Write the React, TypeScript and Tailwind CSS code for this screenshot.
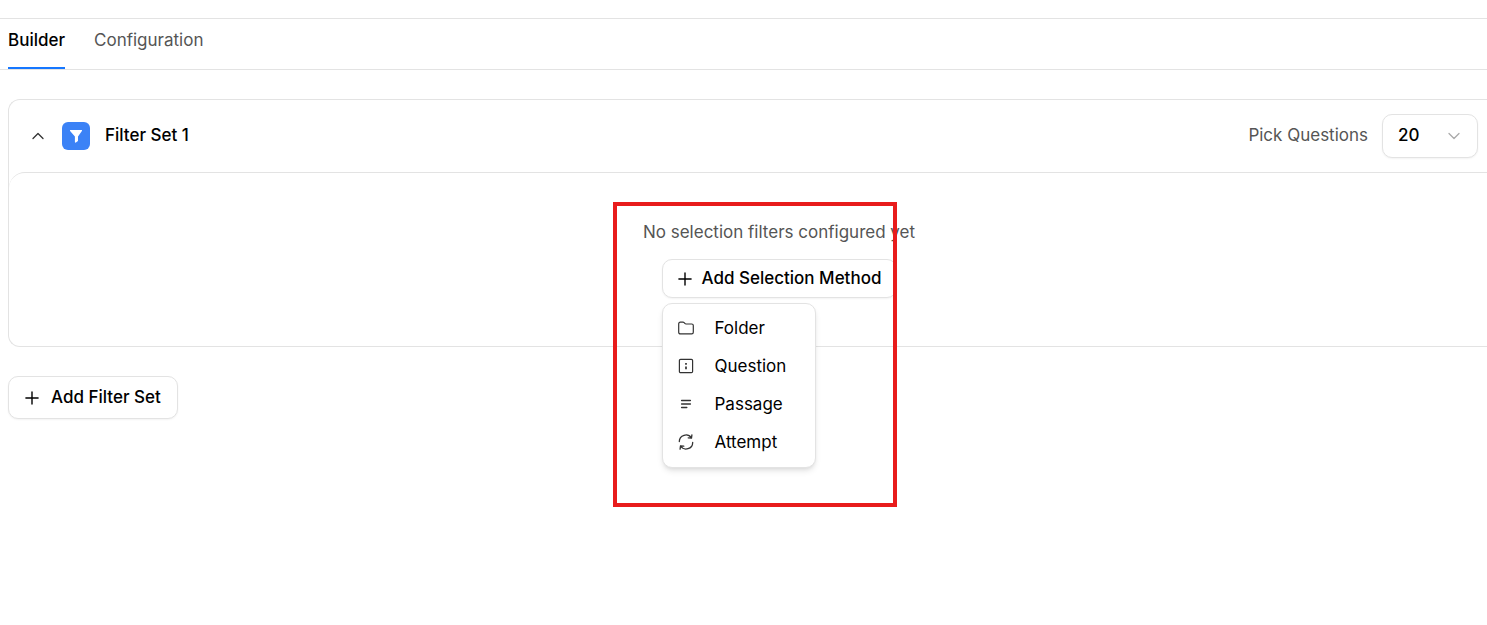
import React, { useState } from "react"

const buttonClass =
  "flex items-center rounded-[10px] border border-[#e3e3e3] bg-white font-medium text-black shadow-xs"

interface IconProps {
  className?: string
}

const PlusIcon = ({ className }: IconProps) => (
  <svg className={className} viewBox="0 0 14 14" fill="none" stroke="currentColor" strokeWidth={1.4} strokeLinecap="round">
    <path d="M7 .9v12.2M.9 7h12.2" />
  </svg>
)

const ChevronIcon = ({ className }: IconProps) => (
  <svg className={className} viewBox="0 0 12 12" fill="none" stroke="currentColor" strokeWidth={1.3} strokeLinecap="round" strokeLinejoin="round">
    <path d="M1 3.5l5 5 5-5" />
  </svg>
)

const FunnelIcon = ({ className }: IconProps) => (
  <svg className={className} viewBox="0 0 14 14" fill="currentColor">
    <path d="M1.6 1h10.8c.6 0 .8.6.5 1L9 7.4v4.1c0 .3-.1.5-.4.7l-1.7 1.3c-.4.3-1 .1-1-.5V7.4L1.1 2c-.3-.4-.1-1 .5-1z" />
  </svg>
)

const FolderIcon = () => (
  <svg className="size-4" viewBox="0 0 16 16" fill="none" stroke="currentColor" strokeWidth={1.2} strokeLinejoin="round">
    <path d="M.7 12.3V3.9c0-1 .6-1.7 1.7-1.7H5c.5 0 .8.2 1.1.5l1 1c.2.2.5.3.8.3h5.8c1 0 1.6.6 1.6 1.6v6.7c0 1-.6 1.6-1.6 1.6H2.4c-1 0-1.7-.6-1.7-1.6z" />
  </svg>
)

const QuestionIcon = () => (
  <svg className="size-4" viewBox="0 0 16 16" fill="none" stroke="currentColor" strokeWidth={1.2}>
    <rect x="1.4" y="1.4" width="13.2" height="13.2" rx="1.2" />
    <path d="M8 5v1.8M8 8.4v2.8" strokeWidth={1.7} />
  </svg>
)

const PassageIcon = () => (
  <svg className="size-4" viewBox="0 0 16 16" fill="none" stroke="currentColor" strokeWidth={1.4} strokeLinecap="round">
    <path d="M3.6 4.5h8.8M3.6 8h8.8M3.6 11.5h5.2" />
  </svg>
)

const AttemptIcon = () => (
  <svg className="size-4" viewBox="0 0 16 16" fill="none" stroke="currentColor" strokeWidth={1.3} strokeLinecap="round" strokeLinejoin="round">
    <path d="M1.3 7.6A6.6 6.6 0 0 1 13.4 4M13.9.9l-.4 3.3-3.3-.4" />
    <path d="M14.7 8.4A6.6 6.6 0 0 1 2.6 12M2.1 15.1l.4-3.3 3.3.4" />
  </svg>
)

const methods = [
  { label: "Folder", icon: FolderIcon },
  { label: "Question", icon: QuestionIcon },
  { label: "Passage", icon: PassageIcon },
  { label: "Attempt", icon: AttemptIcon },
]

const tabs = ["Builder", "Configuration"]

const SelectionMethodMenu = () => (
  <div
    role="menu"
    className="absolute top-full left-0 mt-[5px] w-[154px] rounded-[10px] border border-[#e3e3e3] bg-white pt-[5px] pb-1.5 shadow-md"
  >
    {methods.map(({ label, icon: Icon }) => (
      <button
        key={label}
        type="button"
        role="menuitem"
        className="flex h-[38px] w-full items-center gap-[21px] px-[15px] text-left text-black"
      >
        <span className="text-[#333]">
          <Icon />
        </span>
        {label}
      </button>
    ))}
  </div>
)

const FilterSet = () => {
  const [count, setCount] = useState("20")
  const [menuOpen, setMenuOpen] = useState(true)

  return (
    <section className="ml-2 rounded-l-xl border border-r-0 border-[#e3e3e3]">
      <header className="flex h-[72px] items-center pr-[9px] pl-[23px]">
        <button type="button" aria-label="Collapse filter set" className="text-[#333]">
          <ChevronIcon className="size-3 rotate-180" />
        </button>
        <span className="ml-[18px] flex size-7 items-center justify-center rounded-md bg-[#3b82f6] text-white">
          <FunnelIcon className="size-3.5" />
        </span>
        <h2 className="ml-[15px] pb-0.5 font-medium text-black">Filter Set 1</h2>
        <label htmlFor="pick" className="ml-auto pb-0.5 text-[#555]">
          Pick Questions
        </label>
        <div className="relative ml-[14px]">
          <select
            id="pick"
            value={count}
            onChange={(e) => setCount(e.target.value)}
            className="h-11 w-24 appearance-none rounded-[10px] border border-[#e3e3e3] bg-white px-[15px] pb-0.5 font-medium text-black shadow-xs"
          >
            <option>10</option>
            <option>20</option>
            <option>30</option>
          </select>
          <ChevronIcon className="pointer-events-none absolute top-4 right-[18px] size-3 text-[#aaa]" />
        </div>
      </header>

      <div className="flex h-[174px] flex-col items-center rounded-tl-2xl border-t border-[#e3e3e3] pt-[47px] pl-[62px]">
        <p className="text-[#555]">No selection filters configured yet</p>
        <div className="relative mt-[15px]">
          <button
            type="button"
            aria-expanded={menuOpen}
            onClick={() => setMenuOpen(!menuOpen)}
            className={`${buttonClass} h-[39px] w-[235px] gap-[10px] pl-[15px]`}
          >
            <PlusIcon className="size-3.5" />
            <span className="pb-0.5">Add Selection Method</span>
          </button>
          {menuOpen && <SelectionMethodMenu />}
          {/* highlight frame */}
          <div className="pointer-events-none absolute -top-[57px] right-0 -left-[49px] h-[305px] border-4 border-[#e81c1c]" />
        </div>
      </div>
    </section>
  )
}

export default function App() {
  const [tab, setTab] = useState("Builder")

  return (
    <main className="min-h-screen overflow-x-hidden bg-white pt-[18px] font-['Inter',sans-serif] text-[17px]/6">
      <nav className="flex gap-[29px] border-y border-[#e3e3e3] px-2">
        {tabs.map((name) => (
          <button
            key={name}
            type="button"
            onClick={() => setTab(name)}
            className={`h-[50px] border-b-2 pb-1.5 ${
              tab === name ? "border-[#1677ff] font-medium text-black" : "border-transparent text-[#555]"
            }`}
          >
            {name}
          </button>
        ))}
      </nav>

      <div className="pt-[29px]">
        <FilterSet />
        <button type="button" className={`${buttonClass} mt-[29px] ml-2 h-[43px] gap-3 px-4`}>
          <PlusIcon className="size-3.5" />
          <span className="pb-0.5">Add Filter Set</span>
        </button>
      </div>
    </main>
  )
}
